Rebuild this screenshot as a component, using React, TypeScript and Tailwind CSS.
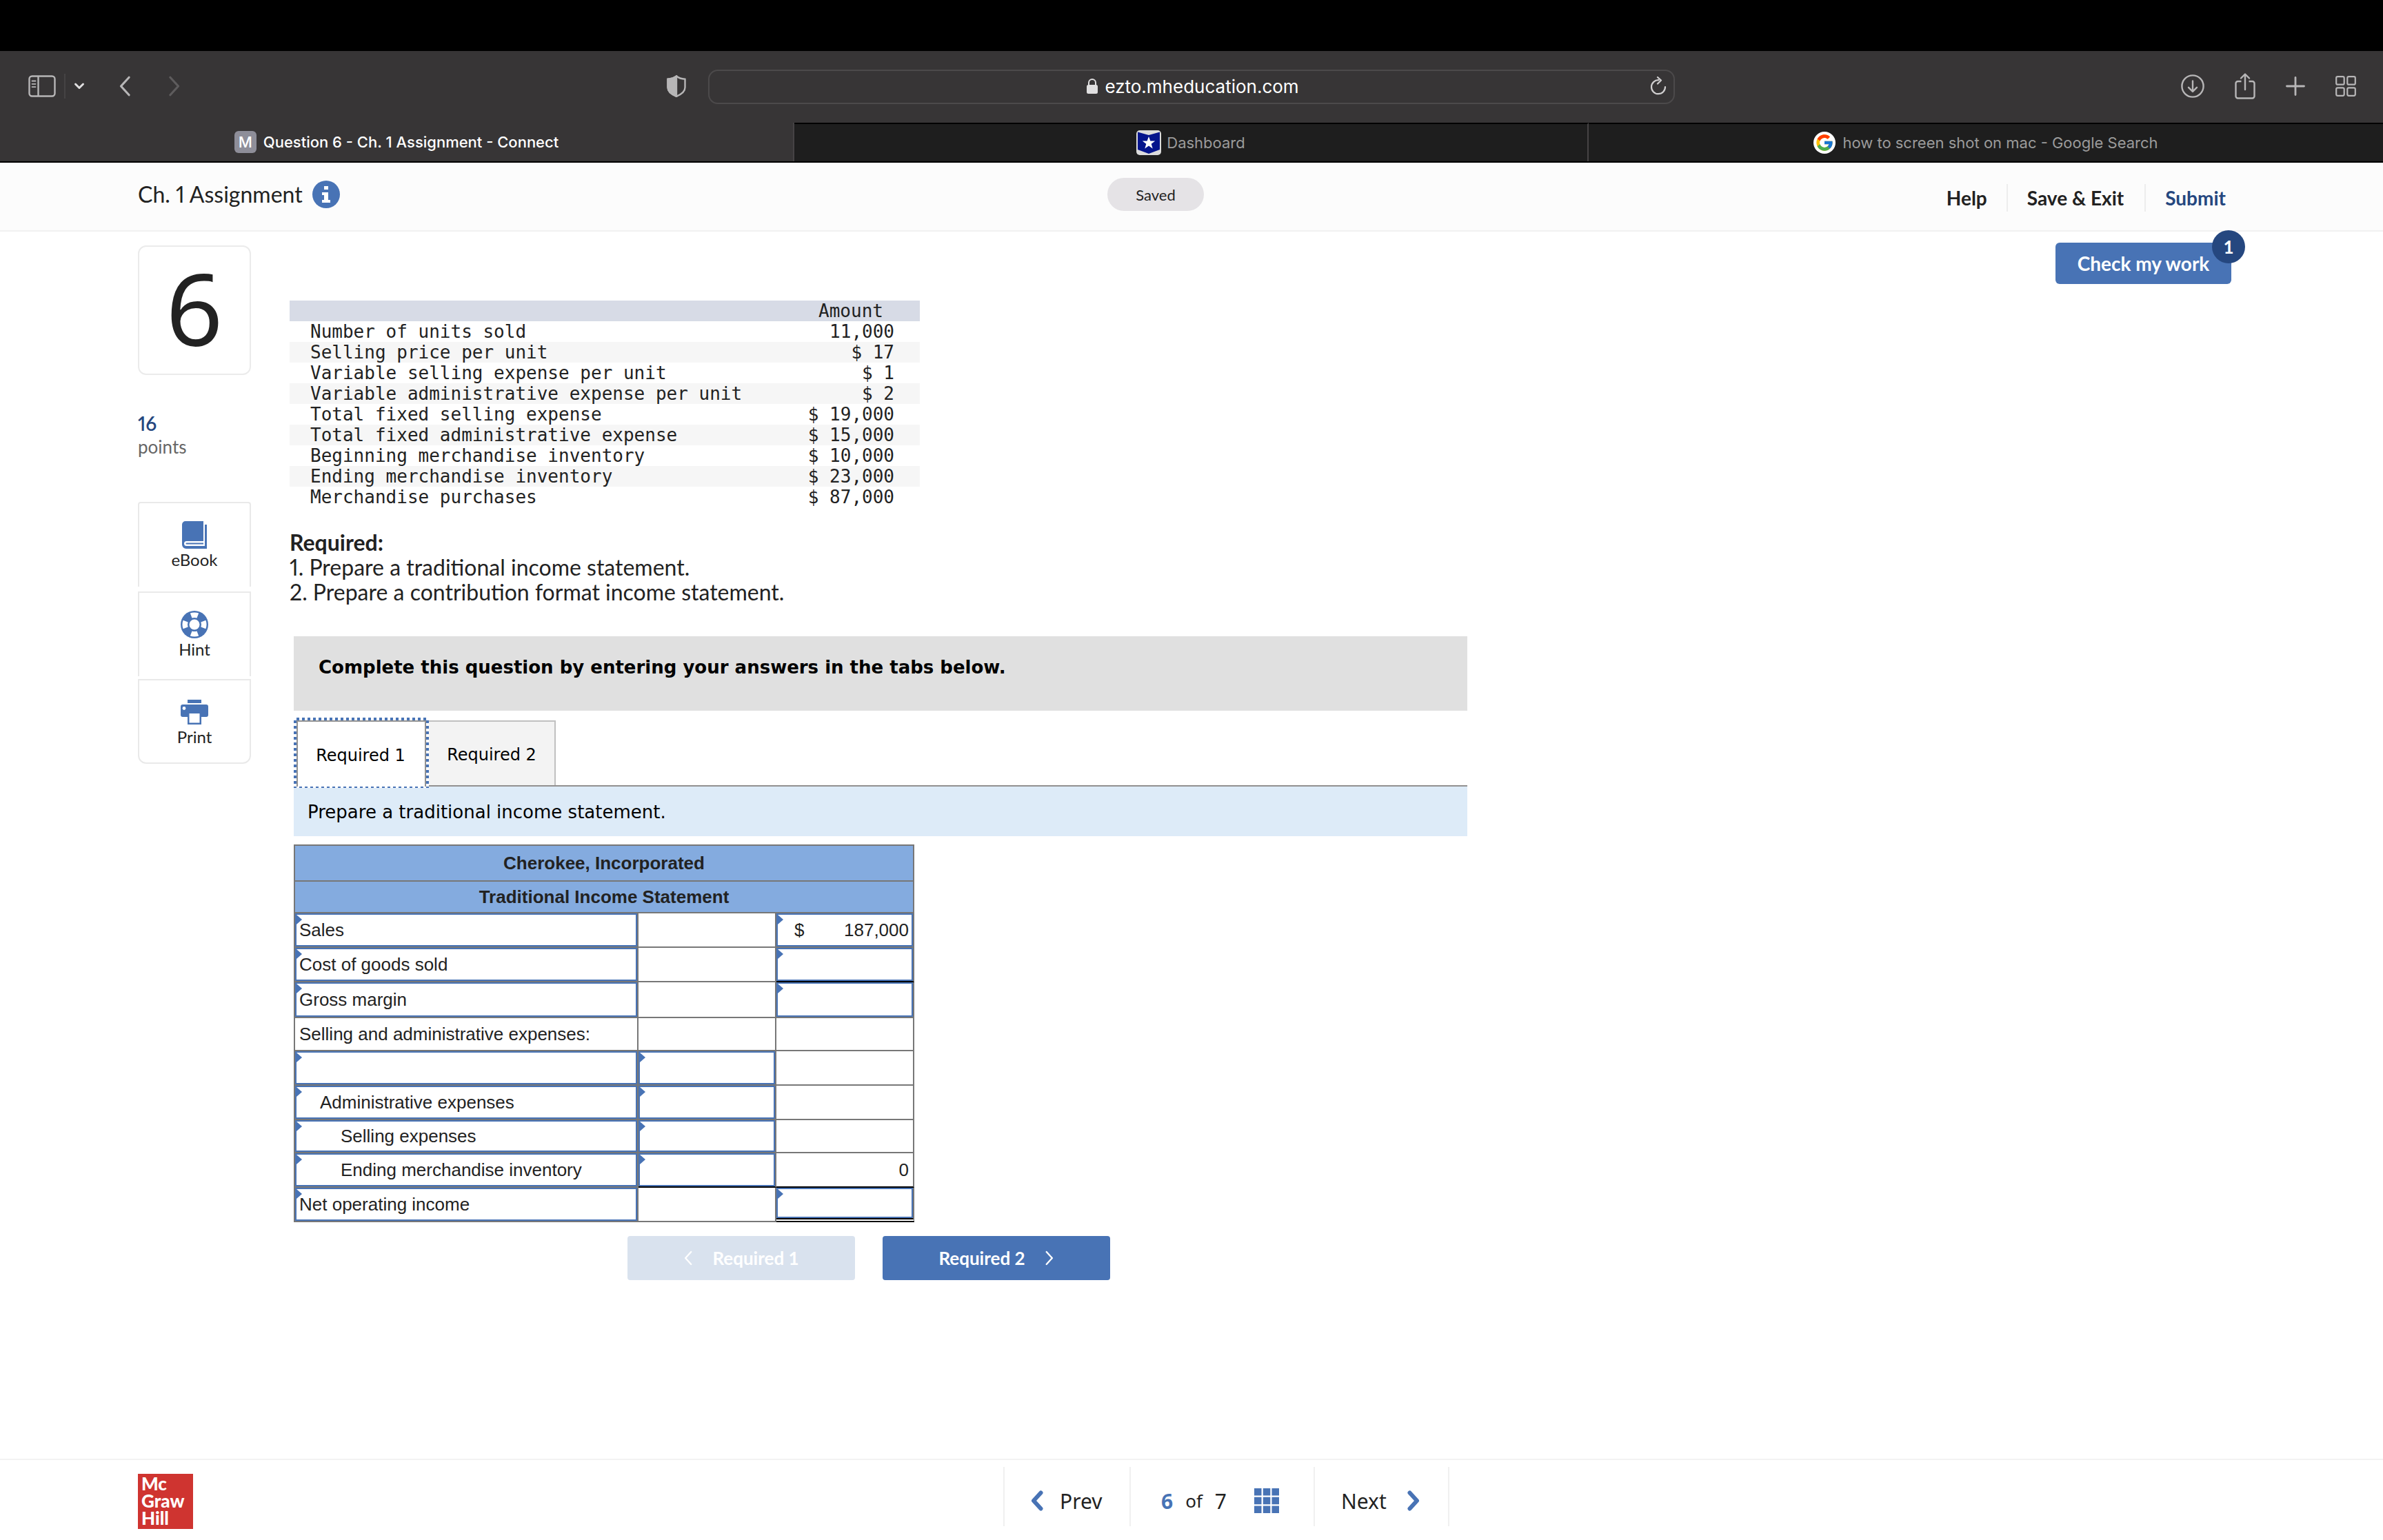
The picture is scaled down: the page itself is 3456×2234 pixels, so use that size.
import type { ReactNode } from "react";
import { FcGoogle } from "react-icons/fc";

type AmountRow = {
  label: string;
  amount: string;
};

type StatementRow = {
  label: string;
  height: string;
  indent?: string;
  labelInput?: boolean;
  detailInput?: boolean;
  totalInput?: boolean;
  currency?: string;
  total?: string;
  detailRule?: string;
  totalRule?: string;
};

const amounts: AmountRow[] = [
  { label: "Number of units sold", amount: "11,000" },
  { label: "Selling price per unit", amount: "$ 17" },
  { label: "Variable selling expense per unit", amount: "$ 1" },
  { label: "Variable administrative expense per unit", amount: "$ 2" },
  { label: "Total fixed selling expense", amount: "$ 19,000" },
  { label: "Total fixed administrative expense", amount: "$ 15,000" },
  { label: "Beginning merchandise inventory", amount: "$ 10,000" },
  { label: "Ending merchandise inventory", amount: "$ 23,000" },
  { label: "Merchandise purchases", amount: "$ 87,000" },
];

const grayRule = "border-b-2 border-b-[#777777]";
const blackRule = "border-b-2 border-b-black";
const doubleRule = "border-b-[6px] border-double border-b-black";

const statement: StatementRow[] = [
  { label: "Sales", height: "h-[50px]", labelInput: true, totalInput: true, currency: "$", total: "187,000" },
  { label: "Cost of goods sold", height: "h-[50px]", labelInput: true, totalInput: true, totalRule: blackRule },
  { label: "Gross margin", height: "h-[52px]", labelInput: true, totalInput: true },
  { label: "Selling and administrative expenses:", height: "h-[48px]" },
  { label: "", height: "h-[50px]", labelInput: true, detailInput: true },
  { label: "Administrative expenses", height: "h-[50px]", indent: "pl-[34px]", labelInput: true, detailInput: true },
  { label: "Selling expenses", height: "h-[48px]", indent: "pl-16", labelInput: true, detailInput: true },
  {
    label: "Ending merchandise inventory",
    height: "h-[50px]",
    indent: "pl-16",
    labelInput: true,
    detailInput: true,
    total: "0",
    detailRule: blackRule,
    totalRule: blackRule,
  },
  { label: "Net operating income", height: "h-[50px]", labelInput: true, totalInput: true, totalRule: doubleRule },
];

function SidebarIcon() {
  return (
    <svg className="h-8 w-10" viewBox="0 0 40 32" fill="none" stroke="#b7b6b7" strokeWidth="2.4">
      <rect x="1.5" y="1.5" width="37" height="29" rx="4" />
      <path d="M14.500 2v28" />
      <path d="M5.500 8.500h5M5.500 12.800h5M5.500 17.100h5" strokeWidth="1.800" strokeLinecap="round" />
    </svg>
  );
}

function ShieldIcon() {
  return (
    <svg className="h-8 w-7" viewBox="0 0 28 32" fill="none" stroke="#b7b6b7" strokeWidth="2.4">
      <path d="M14 1.5c3 2.5 7 4 12.5 4.3v12c0 6-5 10-12.500 13C6.500 27.800 1.500 23.800 1.500 17.800v-12C7 5.500 11 4 14 1.500Z" />
      <path d="M14 1.500v29.300C6.500 27.800 1.500 23.800 1.500 17.800v-12C7 5.500 11 4 14 1.500Z" fill="#b7b6b7" />
    </svg>
  );
}

function LockIcon() {
  return (
    <svg className="h-6 w-4" viewBox="0 0 16 24" fill="#e0dfe0">
      <rect y="10" width="16" height="13" rx="2.500" />
      <path d="M3 11V7a5 5 0 0 1 10 0v4" fill="none" stroke="#e0dfe0" strokeWidth="2" />
    </svg>
  );
}

function ReloadIcon() {
  return (
    <svg className="h-7 w-6" viewBox="0 0 24 28" fill="none" stroke="#d0cfd0" strokeWidth="2.2" strokeLinecap="round">
      <path d="M22 15a10 10 0 1 1-9.500-9.800" />
      <path d="m11 1 5 4.500-5 5" strokeLinejoin="round" />
    </svg>
  );
}

function DownloadIcon() {
  return (
    <svg className="h-[34px] w-[34px]" viewBox="0 0 34 34" fill="none" stroke="#b7b6b7" strokeWidth="2.4">
      <circle cx="17" cy="17" r="15.600" />
      <path d="M17 9.500v15M11 18.800l6 6 6-6" strokeLinecap="round" strokeLinejoin="round" />
    </svg>
  );
}

function ShareIcon() {
  return (
    <svg className="h-[38px] w-[30px]" viewBox="0 0 30 38" fill="none" stroke="#b7b6b7" strokeWidth="2.4">
      <path d="M9.500 12H4.500A3 3 0 0 0 1.500 15v18.500a3 3 0 0 0 3 3h21a3 3 0 0 0 3-3V15a3 3 0 0 0-3-3h-5" />
      <path d="M15 24V2M9 7.500 15 1.500l6 6" strokeLinecap="round" strokeLinejoin="round" />
    </svg>
  );
}

function PlusIcon() {
  return (
    <svg className="h-7 w-7" viewBox="0 0 28 28" stroke="#b7b6b7" strokeWidth="2.8" strokeLinecap="round">
      <path d="M14 1.500v25M1.500 14h25" />
    </svg>
  );
}

function OverviewIcon() {
  return (
    <svg className="h-[30px] w-[30px]" viewBox="0 0 30 30" fill="none" stroke="#b7b6b7" strokeWidth="2.2">
      <rect x="1.200" y="1.200" width="11.500" height="11.500" rx="2" />
      <rect x="17.300" y="1.200" width="11.500" height="11.500" rx="2" />
      <rect x="1.200" y="17.300" width="11.500" height="11.500" rx="2" />
      <rect x="17.300" y="17.300" width="11.500" height="11.500" rx="2" />
    </svg>
  );
}

function BadgeFavicon() {
  return (
    <svg className="h-9 w-9" viewBox="0 0 36 36">
      <rect width="36" height="36" rx="5" fill="#dcdcdc" />
      <path d="M2 2.500 18 7l16-4.500V28l-16 6-16-6Z" fill="#04148c" />
      <path d="m18 9 2.400 6.500h6.800l-5.500 4.200 2 6.800-5.700-4-5.700 4 2-6.800-5.500-4.200h6.800Z" fill="#fff" />
    </svg>
  );
}

function BookIcon() {
  return (
    <svg className="h-10 w-9" viewBox="0 0 36 40" fill="#4873b5">
      <path d="M5 0h26v29H6.500a3.500 3.500 0 0 0 0 7H33V5h3v35H6a6 6 0 0 1-6-6V5a5 5 0 0 1 5-5Z" />
      <path d="M6.500 31.500H31v2H6.500a1 1 0 0 1 0-2Z" />
    </svg>
  );
}

function LifeRingIcon() {
  return (
    <svg className="h-10 w-10" viewBox="0 0 40 40">
      <circle cx="20" cy="20" r="20" fill="#4873b5" />
      <circle cx="20" cy="20" r="7.500" fill="#fff" />
      <g fill="#fff">
        <path d="M13.800 3.600a18 18 0 0 1 12.400 0l-2.700 7a10.500 10.500 0 0 0-7 0Z" />
        <path d="M13.800 36.400a18 18 0 0 0 12.400 0l-2.700-7a10.500 10.500 0 0 1-7 0Z" />
        <path d="M3.600 13.800a18 18 0 0 0 0 12.400l7-2.700a10.500 10.500 0 0 1 0-7Z" />
        <path d="M36.400 13.800a18 18 0 0 1 0 12.400l-7-2.700a10.500 10.500 0 0 0 0-7Z" />
      </g>
    </svg>
  );
}

function PrinterIcon() {
  return (
    <svg className="h-9 w-10" viewBox="0 0 40 36" fill="#4873b5">
      <path d="M10 0h20v5H10Z" />
      <path d="M3 7h34a3 3 0 0 1 3 3v12a3 3 0 0 1-3 3h-7v11H10V25H3a3 3 0 0 1-3-3V10a3 3 0 0 1 3-3Zm9.500 13v13.500h15V20Z" fillRule="evenodd" />
      <circle cx="5" cy="12.500" r="2.400" fill="#fff" />
    </svg>
  );
}

function Chevron({ direction, className, width }: { direction: "left" | "right"; className: string; width: number }) {
  return (
    <svg className={className} viewBox="0 0 18 30" fill="none" stroke="currentColor" strokeWidth={width} strokeLinecap="round" strokeLinejoin="round">
      <path d={direction === "left" ? "M14.500 3.500 4 15l10.500 11.500" : "M3.500 3.500 14 15 3.500 26.500"} />
    </svg>
  );
}

function BrowserChrome() {
  return (
    <header className="bg-[#373536] font-[family-name:Inter,sans-serif]">
      <div className="h-[74px] bg-black" />

      <div className="grid h-[104px] grid-cols-[1fr_1402px_1fr] items-center">
        <div className="flex items-center pb-0.5 pl-[41px]">
          <button aria-label="Show sidebar">
            <SidebarIcon />
          </button>
          <span className="ml-3 h-9 w-0.5 bg-[#454344]" />
          <button aria-label="Tab groups" className="ml-3 text-[#e0dfe0]">
            <svg className="h-3 w-4" viewBox="0 0 16 12" fill="none" stroke="currentColor" strokeWidth="3" strokeLinecap="round" strokeLinejoin="round">
              <path d="m2.500 3 5.500 5.500L13.500 3" />
            </svg>
          </button>
          <button aria-label="Back" className="ml-12 text-[#b7b6b7]">
            <Chevron direction="left" className="h-[34px] w-5" width={2.8} />
          </button>
          <button aria-label="Forward" className="ml-[52px] text-[#5e5c5d]">
            <Chevron direction="right" className="h-[34px] w-5" width={2.8} />
          </button>
          <button aria-label="Privacy report" className="mr-8 ml-auto">
            <ShieldIcon />
          </button>
        </div>

        <div className="flex h-[50px] items-center rounded-[14px] border-2 border-[#4c4a4b] pr-2.5 pb-0.5 pl-3.5">
          <span className="w-6" />
          <span className="flex flex-1 items-center justify-center gap-2.5 text-[26px] text-white">
            <LockIcon />
            ezto.mheducation.com
          </span>
          <button aria-label="Reload page">
            <ReloadIcon />
          </button>
        </div>

        <div className="flex items-center justify-end gap-11 pr-[39px] pb-0.5">
          <button aria-label="Downloads">
            <DownloadIcon />
          </button>
          <button aria-label="Share">
            <ShareIcon />
          </button>
          <button aria-label="New tab">
            <PlusIcon />
          </button>
          <button aria-label="Tab overview">
            <OverviewIcon />
          </button>
        </div>
      </div>

      <nav aria-label="Browser tabs" className="grid h-[58px] grid-cols-3 border-b-2 border-black text-[22px]">
        <a href="#question" className="flex items-center justify-center gap-2.5 border-r-2 border-[#454344] font-medium text-white">
          <span className="flex h-8 w-8 items-center justify-center rounded-md bg-[#8e8e99]">M</span>
          Question 6 - Ch. 1 Assignment - Connect
        </a>
        <a href="#dashboard" className="flex items-center justify-center gap-2 border-t-2 border-r-2 border-t-black border-r-[#454344] bg-[#1e1e1e] text-[#9b9b9b]">
          <BadgeFavicon />
          Dashboard
        </a>
        <a href="#search" className="flex items-center justify-center gap-2.5 border-t-2 border-black bg-[#1e1e1e] text-[#9b9b9b]">
          <span className="flex h-8 w-8 items-center justify-center rounded-full bg-white">
            <FcGoogle className="h-7 w-7" />
          </span>
          how to screen shot on mac - Google Search
        </a>
      </nav>
    </header>
  );
}

function AssignmentHeader() {
  return (
    <header className="flex h-[100px] items-center border-b-2 border-[#f1f1f1] bg-[#fcfcfc] pr-[228px] pl-[200px]">
      <div className="flex w-[1406px] items-center gap-3.5 pb-1.5">
        <h1 className="text-[32px] proportional-nums">Ch. 1 Assignment</h1>
        <button aria-label="Assignment information" className="flex h-10 w-10 items-center justify-center rounded-full bg-[#4873b5]">
          <svg className="h-6 w-4" viewBox="0 0 16 24" fill="#fff">
            <path d="M5 0h6v5H5ZM2 9h9v11h3v4H2v-4h3v-7H2Z" />
          </svg>
        </button>
      </div>
      <span className="mb-1.5 flex h-12 w-[140px] items-center justify-center rounded-full bg-[#e5e3e6] text-[22px]">Saved</span>
      <nav aria-label="Assignment actions" className="mt-1 ml-auto flex h-10 items-center text-[28px] font-bold">
        <a href="#help" className="pr-7">
          Help
        </a>
        <a href="#exit" className="flex h-10 items-center border-x-2 border-[#ededed] pr-[30px] pl-7">
          Save &amp; Exit
        </a>
        <a href="#submit" className="pl-7 text-[#25477f]">
          Submit
        </a>
      </nav>
    </header>
  );
}

function ToolButton({ label, className, children }: { label: string; className: string; children: ReactNode }) {
  return (
    <button className={`flex h-[123px] w-full flex-col items-center border-2 border-[#e9e9e9] pt-[26px] text-2xl leading-8 ${className}`}>
      <span className="flex h-10 items-center">{children}</span>
      {label}
    </button>
  );
}

function QuestionSidebar() {
  return (
    <aside className="mt-5 w-[164px] shrink-0">
      <div className="flex h-[188px] items-center justify-center rounded-xl border-2 border-[#ebebeb] pb-2 font-[family-name:'Noto_Sans',sans-serif] text-[144px] leading-none">
        6
      </div>
      <p className="mt-[52px] text-[28px] leading-9 font-semibold text-[#25477f] proportional-nums">16</p>
      <p className="text-[26px] leading-8 text-[#666666]">points</p>
      <div className="mt-16">
        <ToolButton label="eBook" className="rounded-t border-b-0">
          <BookIcon />
        </ToolButton>
        <ToolButton label="Hint" className="mt-[7px] border-b-0">
          <LifeRingIcon />
        </ToolButton>
        <ToolButton label="Print" className="mt-1 rounded-b-xl">
          <PrinterIcon />
        </ToolButton>
      </div>
    </aside>
  );
}

function AmountTable() {
  return (
    <table className="w-[914px] font-[family-name:'DejaVu_Sans_Mono',monospace] text-[26px] leading-[30px]">
      <thead>
        <tr className="bg-[#d7dbe6]">
          <td />
          <th className="w-[126px] font-normal">Amount</th>
          <td className="w-[37px]" />
        </tr>
      </thead>
      <tbody>
        {amounts.map((row) => (
          <tr key={row.label} className="even:bg-[#f6f6f6]">
            <td className="p-0 pl-[30px]">{row.label}</td>
            <td className="p-0 text-right">{row.amount}</td>
            <td />
          </tr>
        ))}
      </tbody>
    </table>
  );
}

function CellBox({ children }: { children: ReactNode }) {
  return (
    <div className="relative flex h-full items-center border-2 border-[#4873b5]">
      <svg className="absolute top-0 left-0 h-3.5 w-2" viewBox="0 0 8 14" fill="#4873b5">
        <path d="M0 0 8 7 0 14Z" />
      </svg>
      {children}
    </div>
  );
}

function StatementTable() {
  return (
    <table className="mt-3 w-[900px] table-fixed border-separate border-spacing-0 border-t-2 border-l-2 border-[#777777] font-[family-name:'Liberation_Sans',Arial,sans-serif] text-[26px] leading-[30px] text-[#222222]">
      <colgroup>
        <col className="w-[498px]" />
        <col className="w-[200px]" />
        <col className="w-[200px]" />
      </colgroup>
      <thead>
        <tr>
          <th colSpan={3} className="h-[52px] border-r-2 border-b-2 border-[#777777] bg-[#84abdf] p-0">
            Cherokee, Incorporated
          </th>
        </tr>
        <tr>
          <th colSpan={3} className="h-[46px] border-r-2 border-b-2 border-[#777777] bg-[#84abdf] p-0">
            Traditional Income Statement
          </th>
        </tr>
      </thead>
      <tbody>
        {statement.map((row, index) => (
          <tr key={index}>
            <td className={`border-r-2 border-r-[#777777] p-0 ${row.height} ${grayRule}`}>
              {row.labelInput ? (
                <CellBox>
                  <input
                    aria-label={`Line ${index + 1} account`}
                    defaultValue={row.label}
                    className={`w-full outline-none ${row.indent ?? "pl-1"}`}
                  />
                </CellBox>
              ) : (
                <span className="pl-1.5">{row.label}</span>
              )}
            </td>
            <td className={`border-r-2 border-r-[#777777] p-0 ${row.height} ${row.detailRule ?? grayRule}`}>
              {row.detailInput && (
                <CellBox>
                  <input aria-label={`Line ${index + 1} detail amount`} className="w-full pr-1.5 text-right outline-none" />
                </CellBox>
              )}
            </td>
            <td className={`border-r-2 border-r-[#777777] p-0 text-right ${row.height} ${row.totalRule ?? grayRule}`}>
              {row.totalInput ? (
                <CellBox>
                  {row.currency && <span className="pl-6">{row.currency}</span>}
                  <input
                    aria-label={`Line ${index + 1} total amount`}
                    defaultValue={row.total}
                    className="w-full min-w-0 pr-1 text-right outline-none"
                  />
                </CellBox>
              ) : (
                <span className="pr-1.5">{row.total}</span>
              )}
            </td>
          </tr>
        ))}
      </tbody>
    </table>
  );
}

function AnswerSection() {
  return (
    <section aria-label="Answer" className="mt-[46px] ml-1.5 font-[family-name:'DejaVu_Sans',Verdana,sans-serif] text-black">
      <p className="h-[108px] bg-[#e0e0e0] pt-7 pl-9 text-[26px] leading-[34px] font-bold">
        Complete this question by entering your answers in the tabs below.
      </p>

      <div role="tablist" className="mt-2.5 flex h-[100px] text-2xl">
        {/* focus ring made of 4px squares */}
        <div className="relative -mr-0.5 h-[102px] w-[196px] bg-[repeating-conic-gradient(#4873b5_0_25%,#fff_0_50%)] bg-[length:8px_8px] p-1 pb-0.5">
          <button role="tab" aria-selected="true" className="h-full w-full border-2 border-b-0 border-[#929292] bg-white pt-1 pr-0.5">
            Required 1
          </button>
        </div>
        <div className="flex-1 border-b-2 border-[#929090] pt-1">
          <button role="tab" aria-selected="false" className="h-full w-[186px] border-2 border-b-0 border-[#c0c0c0] bg-[#f3f3f3] pt-1">
            Required 2
          </button>
        </div>
      </div>

      <p className="flex h-[72px] items-center bg-[#ddebf8] pt-0.5 pl-5 text-[26px]">Prepare a traditional income statement.</p>

      <StatementTable />

      <div className="mt-5 flex gap-10 pl-[484px] font-[family-name:Lato,sans-serif] text-[26px] font-bold text-white">
        <button disabled className="flex h-16 w-[330px] items-center justify-center gap-7 rounded bg-[#d9e2ee]">
          <Chevron direction="left" className="h-6 w-3.5" width={3} />
          Required 1
        </button>
        <button className="flex h-16 w-[330px] items-center justify-center gap-7 rounded bg-[#4873b5]">
          Required 2
          <Chevron direction="right" className="h-6 w-3.5" width={3} />
        </button>
      </div>
    </section>
  );
}

function AssignmentFooter() {
  return (
    <footer className="mt-auto flex h-[118px] border-t-2 border-[#f2f2f2] pt-2.5 pl-[200px]">
      <div className="mt-2.5 h-20 w-20 bg-[#cf3430] pt-0.5 pl-[5px] font-[family-name:Lato,sans-serif] text-[26px] leading-[25px] font-black text-white">
        Mc
        <br />
        Graw
        <br />
        Hill
      </div>
      <nav
        aria-label="Question navigation"
        className="ml-[1175px] flex h-[86px] items-stretch border-x-2 border-[#f0f0f0] font-[family-name:'Noto_Sans',sans-serif] text-[30px]"
      >
        <a href="#prev" className="flex w-[181px] items-center gap-6 pt-3 pl-[38px]">
          <Chevron direction="left" className="h-[30px] w-[18px] text-[#4873b5]" width={6} />
          Prev
        </a>
        <div className="flex w-[269px] items-center gap-[18px] border-x-2 border-[#f0f0f0] pt-3 pl-11">
          <span className="font-bold text-[#4873b5]">6</span>
          <span className="text-[26px]">of</span>
          <span>7</span>
          <button aria-label="Question list" className="ml-[22px]">
            <svg className="h-9 w-9" viewBox="0 0 36 36" fill="#4873b5">
              <path d="M0 0h10.500v10.500H0ZM12.800 0h10.500v10.500H12.800ZM25.500 0H36v10.500H25.500ZM0 12.800h10.500v10.500H0ZM12.800 12.800h10.500v10.500H12.800ZM25.500 12.800H36v10.500H25.500ZM0 25.500h10.500V36H0ZM12.800 25.500h10.500V36H12.800ZM25.500 25.500H36V36H25.500Z" />
            </svg>
          </button>
        </div>
        <a href="#next" className="flex w-[193px] items-center gap-[30px] pt-3 pl-[38px]">
          Next
          <Chevron direction="right" className="h-[30px] w-[18px] text-[#4873b5]" width={6} />
        </a>
      </nav>
    </footer>
  );
}

export default function App() {
  return (
    <div className="flex min-h-screen flex-col bg-white font-[family-name:Lato,sans-serif] text-[#222222]">
      <BrowserChrome />
      <AssignmentHeader />

      <main className="flex items-start pr-[220px] pl-[200px]">
        <QuestionSidebar />

        <div className="mt-[100px] ml-14 w-[1708px]">
          <AmountTable />
          <div className="mt-[33px] text-[32px] leading-9 proportional-nums">
            <p className="font-bold">Required:</p>
            <p>1. Prepare a traditional income statement.</p>
            <p>2. Prepare a contribution format income statement.</p>
          </div>
          <AnswerSection />
        </div>

        <div className="relative mt-4 ml-auto">
          <button className="h-[60px] w-[255px] rounded-md bg-[#4873b5] text-[28px] font-bold text-white">Check my work</button>
          <span className="absolute -top-[18px] -right-5 flex h-12 w-12 items-center justify-center rounded-full bg-[#25477f] text-[26px] font-bold text-white">
            1
          </span>
        </div>
      </main>

      <AssignmentFooter />
    </div>
  );
}
